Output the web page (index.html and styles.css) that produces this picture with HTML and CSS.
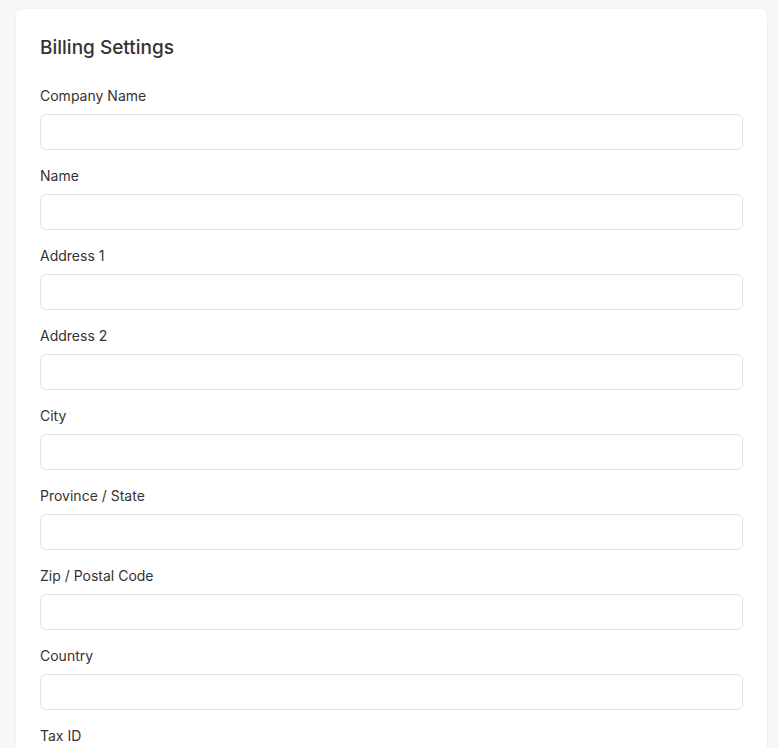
FILE: index.html
```html
<!DOCTYPE html>
<html lang="en">
<head>
    <meta charset="UTF-8">
    <meta name="viewport" content="width=device-width, initial-scale=1.0">
    <title>Billing Settings</title>
    <link rel="stylesheet" href="styles.css">
</head>
<body>
    <!-- Billing form card -->
    <div class="card">
        <h2 class="card-title">Billing Settings</h2>

        <div class="field">
            <label for="company">Company Name</label>
            <input id="company" type="text">
        </div>
        <div class="field">
            <label for="name">Name</label>
            <input id="name" type="text">
        </div>
        <div class="field">
            <label for="address1">Address 1</label>
            <input id="address1" type="text">
        </div>
        <div class="field">
            <label for="address2">Address 2</label>
            <input id="address2" type="text">
        </div>
        <div class="field">
            <label for="city">City</label>
            <input id="city" type="text">
        </div>
        <div class="field">
            <label for="province">Province / State</label>
            <input id="province" type="text">
        </div>
        <div class="field">
            <label for="zip">Zip / Postal Code</label>
            <input id="zip" type="text">
        </div>
        <div class="field">
            <label for="country">Country</label>
            <input id="country" type="text">
        </div>
        <div class="field">
            <label for="taxid">Tax ID</label>
            <input id="taxid" type="text">
        </div>
    </div>
</body>
</html>
```

FILE: styles.css
```css
* {
    margin: 0;
    padding: 0;
    box-sizing: border-box;
}

body {
    font-family: Inter, 'Noto Sans', sans-serif;
    background: #f7f7f7;
    color: #333;
    padding: 9px 11px 24px 16px;
}

/* card */
.card {
    background: #fff;
    border-radius: 6px;
    box-shadow: 0 1px 4px rgba(0,0,0,0.06);
    padding: 25px 24px 24px 24px;
}

.card-title {
    font-size: 19px;
    font-weight: 500;
    line-height: 28px;
    margin-bottom: 24px;
    color: #333;
}

.field {
    display: flex;
    flex-direction: column;
    margin-bottom: 16px;
}

.field label {
    font-size: 14px;
    line-height: 20px;
    margin-bottom: 8px;
    color: #333;
}

.field input {
    height: 36px;
    border: 1px solid #e2e2e2;
    border-radius: 6px;
    background: #fff;
    padding: 0 12px;
    font-size: 14px;
    font-family: inherit;
    outline: none;
}
```
